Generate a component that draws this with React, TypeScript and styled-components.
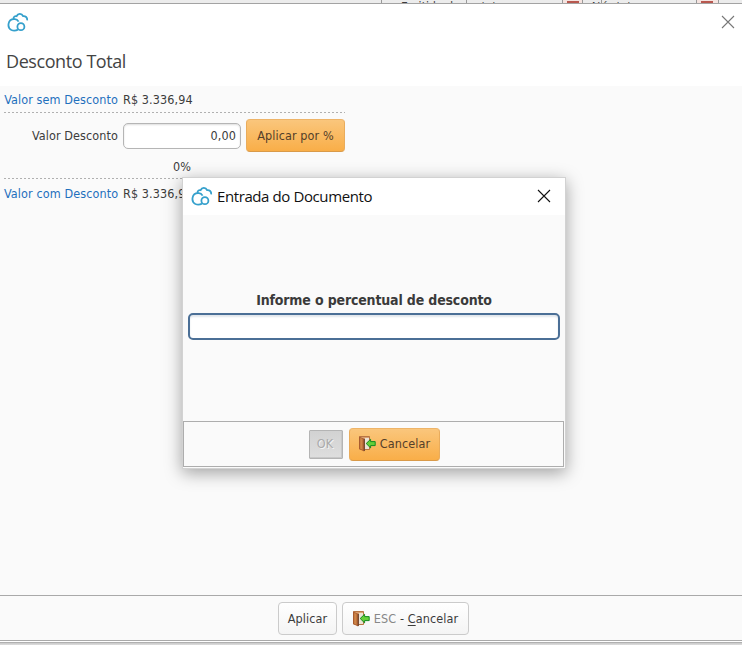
import React from 'react';
import styled, { createGlobalStyle, css } from 'styled-components';

const ui = '"DejaVu Sans Condensed", "DejaVu Sans", "Noto Sans", sans-serif';

const GlobalStyle = createGlobalStyle`
  * { box-sizing: border-box; }
  html, body { margin: 0; padding: 0; overflow: hidden; }
  body { font: 12.5px/18px ${ui}; font-stretch: condensed; letter-spacing: 0.1px; color: #3c3c3c; background: #fafafa; }
  button, input { font: inherit; letter-spacing: inherit; color: inherit; }
`;

const Screen = styled.div`
  position: relative;
  display: flex;
  flex-direction: column;
  width: 742px;
  height: 645px;
  overflow: hidden;
  background: #fafafa;
`;

const BackStrip = styled.div`
  display: flex;
  flex: none;
  height: 4px;
  padding-left: 381px;
  overflow: hidden;
  background: #ececec;
  border-bottom: 1px solid #a3a3a3;
  font-size: 12px;
  line-height: 16px;
`;

const BackCell = styled.div<{ $w: number; $pad: number }>`
  flex: none;
  width: ${p => p.$w}px;
  height: 16px;
  margin-top: -1px;
  padding-left: ${p => p.$pad}px;
  border-left: 1px solid #999;
  white-space: pre;
`;

const CalendarCell = styled(BackCell)`
  background: linear-gradient(#b8584f, #b8584f) 4px 2px / 12px 16px no-repeat, #f5e3df;
`;

const TitleBar = styled.header`
  display: flex;
  flex: none;
  justify-content: space-between;
  height: 38px;
  padding: 8px 7px 0 7px;
  background: #fff;
`;

const Heading = styled.h1`
  flex: none;
  height: 44px;
  margin: 0;
  padding: 7px 0 0 6px;
  background: #fff;
  color: #444;
  font: 400 18px/24px "Open Sans", sans-serif;
  letter-spacing: -0.42px;
`;

const Form = styled.main`
  flex: 1;
  padding: 4px 0 0 4px;
`;

const Row = styled.div<{ $h: number; $rule?: boolean; $lift?: number }>`
  display: grid;
  grid-template-columns: 114px 118px 99px;
  column-gap: 5px;
  align-items: center;
  width: 341px;
  height: ${p => p.$h}px;
  padding-bottom: ${p => p.$lift ?? 0}px;
  white-space: nowrap;
  ${p => p.$rule && css`
    background: repeating-linear-gradient(90deg, #b0b0b0 0 2px, transparent 2px 4px) 0 100% / 100% 1px no-repeat;
  `}
`;

const Label = styled.span<{ $link?: boolean }>`
  color: ${p => (p.$link ? '#1f70bd' : '#3c3c3c')};
  text-align: right;
`;

const Amount = styled.span``;

const Percent = styled.span`
  width: 68px;
  text-align: right;
`;

const ValueInput = styled.input`
  width: 118px;
  height: 26px;
  padding: 0 4px 0 6px;
  background: #fff;
  border: 1px solid #b5b5b5;
  border-radius: 5px;
  box-shadow: inset 0 1px 2px #ddd;
  text-align: right;
  outline: none;
`;

const Button = styled.button<{ $w: number; $kind?: 'accent' | 'disabled' }>`
  display: flex;
  flex: none;
  align-items: center;
  justify-content: center;
  gap: 4px;
  width: ${p => p.$w}px;
  height: 33px;
  padding: 0;
  border: 1px solid #cbcbcb;
  border-radius: 4px;
  background: linear-gradient(#fff, #f4f4f4);
  white-space: pre;
  ${p => p.$kind === 'accent' && css`
    color: #54402a;
    border-color: #eeb468 #e9ac5c #d99a49;
    background: linear-gradient(#fac67c, #f9ae48);
  `}
  ${p => p.$kind === 'disabled' && css`
    height: 29px;
    padding: 0 2px 0 0;
    color: #aaa;
    border-color: #b4b4b4;
    border-radius: 1px;
    background: linear-gradient(#d2d2d2, #dedede);
    box-shadow: inset -1px -1px #c8c8c8;
    text-shadow: 1px 1px #f4f4f4;
  `}
`;

const Muted = styled.span`
  color: #888;
`;

const Key = styled.span`
  text-decoration: underline;
  text-underline-offset: 2px;
`;

const ActionBar = styled.footer`
  display: flex;
  flex: none;
  justify-content: center;
  gap: 5px;
  height: 46px;
  padding: 6px 0 0 5px;
  border-top: 1px solid #a9a9a9;
  border-bottom: 1px solid #a9a9a9;
`;

const WindowEdge = styled.div`
  flex: none;
  height: 4px;
  background: linear-gradient(#fff 0 1px, #b0b0b0 1px 2px, #c9c9c9 2px, #dedede);
`;

const Dialog = styled.section`
  position: absolute;
  left: 182px;
  top: 177px;
  display: flex;
  flex-direction: column;
  width: 384px;
  height: 292px;
  padding-bottom: 1px;
  background: #fafafa;
  border: 1px solid #d2d2d2;
  box-shadow: 0 4px 16px rgba(0, 0, 0, 0.36);
`;

const DialogTitle = styled.header`
  display: flex;
  flex: none;
  height: 37px;
  padding: 8px 14px 0 8px;
  background: #fff;
`;

const DialogName = styled.h2`
  flex: 1;
  margin: 0 0 0 4px;
  color: #111;
  font: 400 15px/21px "Open Sans", sans-serif;
  letter-spacing: -0.4px;
  white-space: nowrap;
`;

const DialogBody = styled.div`
  display: flex;
  flex: 1;
  flex-direction: column;
  align-items: center;
  padding-top: 75px;
`;

const Question = styled.label`
  color: #3a3a3a;
  font-size: 14px;
  font-weight: 700;
  line-height: 20px;
  letter-spacing: -0.16px;
  white-space: nowrap;
`;

const PercentInput = styled.input`
  width: 372px;
  height: 27px;
  margin-top: 3px;
  background: #fff;
  border: 2px solid #4b6f96;
  border-radius: 5px;
  box-shadow: inset 0 2px 2px #e1e6eb;
  outline: none;
`;

const DialogActions = styled.footer`
  display: flex;
  flex: none;
  align-items: center;
  justify-content: center;
  gap: 6px;
  width: 381px;
  height: 46px;
  padding-left: 2px;
  border: 1px solid #adadad;
`;

const Glyph = styled.svg`
  display: block;
  flex: none;
`;

const CloseSpace = styled.span`
  display: block;
  padding-top: 3px;
`;

function CloudLogo() {
  return (
    <Glyph width="22" height="20" viewBox="0 0 22 20" fill="none" stroke="#35a0cc" strokeWidth="1.8">
      <path d="M11.6 9.6C10.6 7.8 9 7 7.2 7.2C.6 7-.2 15.8 4.4 18C6.2 18.8 8.8 18.8 11 17.6" />
      <path d="M6.6 7.2C6.1 4.8 8 3.7 9.6 4.2C10.9 1.2 14.7 1 16.1 4.1C18.4 3.8 20.5 5.4 20.2 8.4" />
      <circle cx="13.9" cy="14.7" r="3.5" />
    </Glyph>
  );
}

function CloseIcon({ color }: { color: string }) {
  return (
    <Glyph width="14" height="14" viewBox="0 0 14 14" fill="none" stroke={color} strokeWidth="1.1">
      <path d="M1 1l12 12M13 1L1 13" />
    </Glyph>
  );
}

function ExitIcon() {
  return (
    <Glyph width="17" height="16" viewBox="0 0 17 16">
      <path d="M.5.5h10v13H5L.5 13z" fill="#d9a070" stroke="#b87544" />
      <path d="M6 2h4v11H6z" fill="#ece2d4" />
      <path d="M0 .5l5.2 2.2v12.8L0 13z" fill="#a95b2e" />
      <path d="M1.2 2l2.4.7v11l-2.4-.9z" fill="#cf8648" />
      <path d="M5.4 3v12" stroke="#6b4630" />
      <path d="M7.2 7.5l4.4-4.2v2.3h4.6v4h-4.6v2.3z" fill="#65cf38" stroke="#168b20" />
    </Glyph>
  );
}

export default function App() {
  return (
    <>
      <GlobalStyle />
      <Screen>
        <BackStrip>
          <BackCell $w={85} $pad={19}>Emitido de</BackCell>
          <BackCell $w={96} $pad={13}>{'/  /'}</BackCell>
          <CalendarCell $w={20} $pad={0} />
          <BackCell $w={19} $pad={7}>Até</BackCell>
          <BackCell $w={95} $pad={13}>{'/  /'}</BackCell>
          <CalendarCell $w={22} $pad={0} />
          <BackCell $w={24} $pad={0} />
        </BackStrip>
        <TitleBar>
          <CloudLogo />
          <CloseSpace><CloseIcon color="#777" /></CloseSpace>
        </TitleBar>
        <Heading>Desconto Total</Heading>
        <Form>
          <Row $h={23} $rule $lift={4}>
            <Label $link>Valor sem Desconto</Label>
            <Amount>R$ 3.336,94</Amount>
          </Row>
          <Row $h={45}>
            <Label>Valor Desconto</Label>
            <ValueInput defaultValue="0,00" />
            <Button $w={99} $kind="accent">Aplicar por %</Button>
          </Row>
          <Row $h={21} $rule $lift={6}>
            <span />
            <Percent>0%</Percent>
          </Row>
          <Row $h={29}>
            <Label $link>Valor com Desconto</Label>
            <Amount>R$ 3.336,94</Amount>
          </Row>
        </Form>
        <ActionBar>
          <Button $w={59}>Aplicar</Button>
          <Button $w={127}>
            <ExitIcon />
            <span><Muted>ESC</Muted> - <Key>C</Key>ancelar</span>
          </Button>
        </ActionBar>
        <WindowEdge />
        <Dialog role="dialog">
          <DialogTitle>
            <CloudLogo />
            <DialogName>Entrada do Documento</DialogName>
            <CloseSpace><CloseIcon color="#111" /></CloseSpace>
          </DialogTitle>
          <DialogBody>
            <Question>Informe o percentual de desconto</Question>
            <PercentInput />
          </DialogBody>
          <DialogActions>
            <Button $w={34} $kind="disabled" disabled>OK</Button>
            <Button $w={91} $kind="accent">
              <ExitIcon />
              Cancelar
            </Button>
          </DialogActions>
        </Dialog>
      </Screen>
    </>
  );
}
